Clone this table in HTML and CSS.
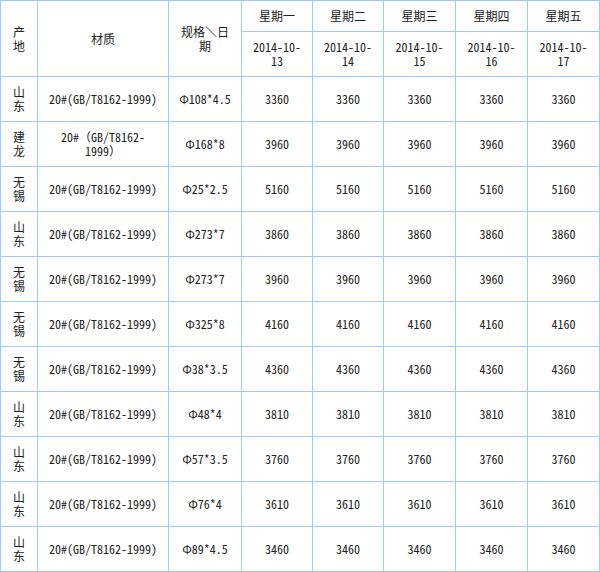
FILE: index.html
```html
<!DOCTYPE html>
<html lang="zh-CN">
<head>
<meta charset="utf-8">
<title>价格表</title>
<link rel="stylesheet" href="styles.css">
</head>
<body>
<table class="price">
  <colgroup>
    <col class="c-origin">
    <col class="c-mat">
    <col class="c-spec">
    <col class="c-d1">
    <col class="c-d2">
    <col class="c-d3">
    <col class="c-d4">
    <col class="c-d5">
  </colgroup>
  <tr class="head-1">
    <td rowspan="2">产地</td>
    <td rowspan="2">材质</td>
    <td rowspan="2">规格＼日期</td>
    <td>星期一</td>
    <td>星期二</td>
    <td>星期三</td>
    <td>星期四</td>
    <td>星期五</td>
  </tr>
  <tr class="row">
    <td>2014-10-13</td>
    <td>2014-10-14</td>
    <td>2014-10-15</td>
    <td>2014-10-16</td>
    <td>2014-10-17</td>
  </tr>
  <tr class="row"><td>山东</td><td>20#(GB/T8162-1999)</td><td>Φ108*4.5</td><td>3360</td><td>3360</td><td>3360</td><td>3360</td><td>3360</td></tr>
  <tr class="row"><td>建龙</td><td>20#（GB/T8162-1999）</td><td>Φ168*8</td><td>3960</td><td>3960</td><td>3960</td><td>3960</td><td>3960</td></tr>
  <tr class="row"><td>无锡</td><td>20#(GB/T8162-1999)</td><td>Φ25*2.5</td><td>5160</td><td>5160</td><td>5160</td><td>5160</td><td>5160</td></tr>
  <tr class="row"><td>山东</td><td>20#(GB/T8162-1999)</td><td>Φ273*7</td><td>3860</td><td>3860</td><td>3860</td><td>3860</td><td>3860</td></tr>
  <tr class="row"><td>无锡</td><td>20#(GB/T8162-1999)</td><td>Φ273*7</td><td>3960</td><td>3960</td><td>3960</td><td>3960</td><td>3960</td></tr>
  <tr class="row"><td>无锡</td><td>20#(GB/T8162-1999)</td><td>Φ325*8</td><td>4160</td><td>4160</td><td>4160</td><td>4160</td><td>4160</td></tr>
  <tr class="row"><td>无锡</td><td>20#(GB/T8162-1999)</td><td>Φ38*3.5</td><td>4360</td><td>4360</td><td>4360</td><td>4360</td><td>4360</td></tr>
  <tr class="row"><td>山东</td><td>20#(GB/T8162-1999)</td><td>Φ48*4</td><td>3810</td><td>3810</td><td>3810</td><td>3810</td><td>3810</td></tr>
  <tr class="row"><td>山东</td><td>20#(GB/T8162-1999)</td><td>Φ57*3.5</td><td>3760</td><td>3760</td><td>3760</td><td>3760</td><td>3760</td></tr>
  <tr class="row"><td>山东</td><td>20#(GB/T8162-1999)</td><td>Φ76*4</td><td>3610</td><td>3610</td><td>3610</td><td>3610</td><td>3610</td></tr>
  <tr class="row"><td>山东</td><td>20#(GB/T8162-1999)</td><td>Φ89*4.5</td><td>3460</td><td>3460</td><td>3460</td><td>3460</td><td>3460</td></tr>
</table>
</body>
</html>
```
FILE: styles.css
```css
html, body {
  margin: 0;
  padding: 0;
  background: #ffffff;
}

.price {
  border-collapse: separate;
  border-spacing: 0;
  border-top: 1px solid #99ccff;
  border-left: 1px solid #99ccff;
  table-layout: fixed;
  width: 600px;
  font-family: "Noto Sans Mono CJK SC", "Noto Sans CJK SC", monospace;
  font-size: 12px;
  line-height: 14px;
  color: #222222;
}

.price td {
  border-right: 1px solid #99ccff;
  border-bottom: 1px solid #99ccff;
  padding: 0 8px;
  text-align: center;
  vertical-align: middle;
}

.c-origin { width: 37px; }
.c-mat { width: 131px; }
.c-spec { width: 73px; }
.c-d1 { width: 71px; }
.c-d2 { width: 71px; }
.c-d3 { width: 72px; }
.c-d4 { width: 72px; }
.c-d5 { width: 72px; }

.head-1 { height: 31px; }
.row { height: 45px; }
```
